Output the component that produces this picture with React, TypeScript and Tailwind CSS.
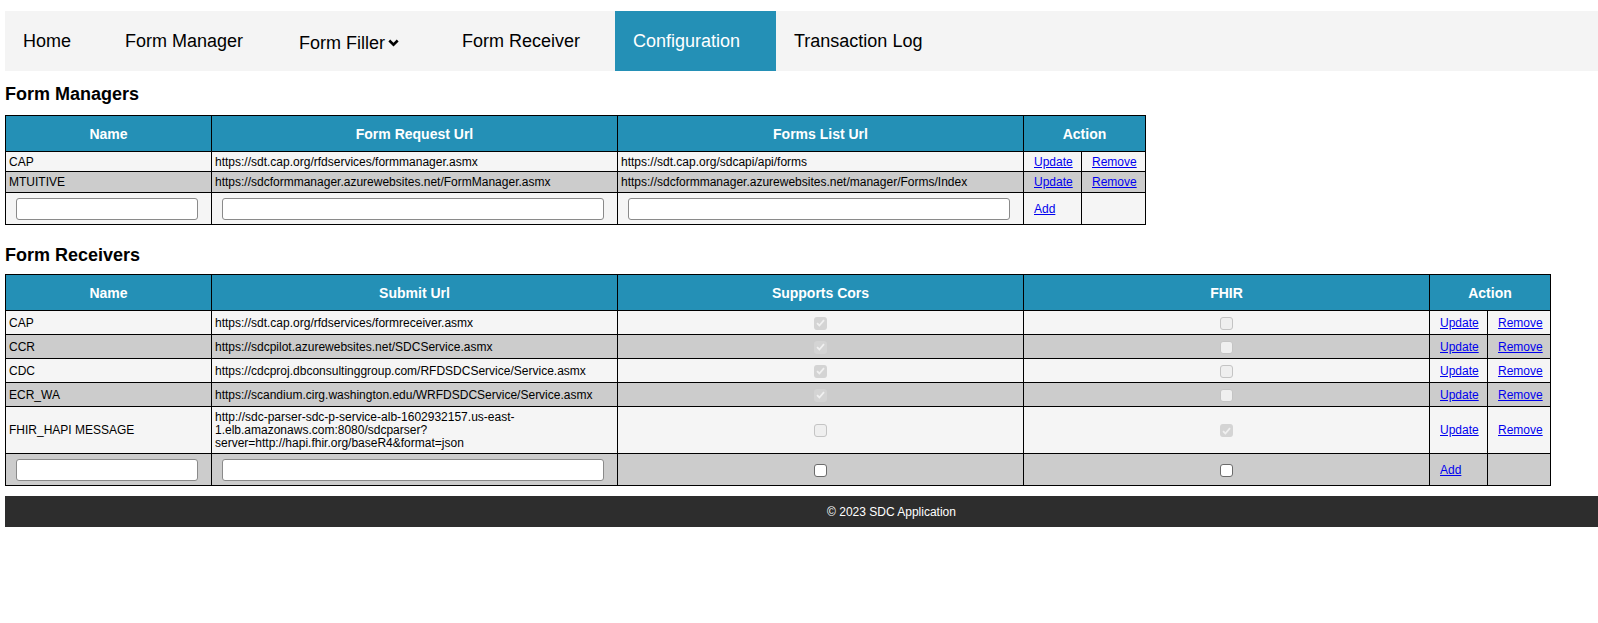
import React from 'react'

const managers = [
  {
    name: 'CAP',
    requestUrl: 'https://sdt.cap.org/rfdservices/formmanager.asmx',
    listUrl: 'https://sdt.cap.org/sdcapi/api/forms',
  },
  {
    name: 'MTUITIVE',
    requestUrl: 'https://sdcformmanager.azurewebsites.net/FormManager.asmx',
    listUrl: 'https://sdcformmanager.azurewebsites.net/manager/Forms/Index',
  },
]

const receivers = [
  { name: 'CAP', url: ['https://sdt.cap.org/rfdservices/formreceiver.asmx'], cors: true, fhir: false },
  { name: 'CCR', url: ['https://sdcpilot.azurewebsites.net/SDCService.asmx'], cors: true, fhir: false },
  { name: 'CDC', url: ['https://cdcproj.dbconsultinggroup.com/RFDSDCService/Service.asmx'], cors: true, fhir: false },
  { name: 'ECR_WA', url: ['https://scandium.cirg.washington.edu/WRFDSDCService/Service.asmx'], cors: true, fhir: false },
  {
    name: 'FHIR_HAPI MESSAGE',
    url: [
      'http://sdc-parser-sdc-p-service-alb-1602932157.us-east-',
      '1.elb.amazonaws.com:8080/sdcparser?',
      'server=http://hapi.fhir.org/baseR4&format=json',
    ],
    cors: false,
    fhir: true,
  },
]

// row striping: odd rows light, even rows gray
const rowBg = (i: number) => (i % 2 === 0 ? 'bg-[#f5f5f5]' : 'bg-[#cccccc]')

function Check({ checked, disabled }: { checked?: boolean; disabled?: boolean }) {
  if (!disabled) {
    return <span className="inline-block w-[13px] h-[13px] rounded-[3px] border border-[#6b6b6b] bg-white align-middle" />
  }
  if (checked) {
    return (
      <span className="inline-flex items-center justify-center w-[13px] h-[13px] rounded-[3px] bg-[#d4d4d4] align-middle">
        <svg width="9" height="8" viewBox="0 0 9 8">
          <path d="M1 4.2 L3.4 6.5 L8 1.2" stroke="#f0f0f0" strokeWidth="1.8" fill="none" />
        </svg>
      </span>
    )
  }
  return <span className="inline-block w-[13px] h-[13px] rounded-[3px] border border-[#c4c4c4] bg-[#efefef] align-middle" />
}

function TextInput() {
  return <span className="block w-full h-[22px] rounded-[3px] border border-[#8a8a8a] bg-white" />
}

function LinkText({ children }: { children: React.ReactNode }) {
  return <a className="text-[#0000ee] underline cursor-pointer">{children}</a>
}

const th = 'h-[36px] border border-black bg-[#2490b6] text-white font-bold text-[14px] text-center align-middle'
const td = 'border border-black px-[3px] py-0 align-middle'
const tdAction = 'border border-black pl-[10px] pr-[6px] py-0 align-middle text-left'

export default function App() {
  return (
    <div className="min-h-[623px] bg-white pt-[11px] pl-[5px] text-black" style={{ fontFamily: '"Liberation Sans", Arial, sans-serif' }}>
      {/* Nav */}
      <nav className="flex h-[60px] bg-[#f4f4f4] text-[18px]">
        <a className="flex items-center w-[102px] pl-[18px]">Home</a>
        <a className="flex items-center w-[174px] pl-[18px]">Form Manager</a>
        <a className="flex items-center w-[163px] pl-[18px] pt-[4px]">
          Form Filler
          <svg className="ml-[3px]" width="11" height="8" viewBox="0 0 11 8">
            <path d="M1.3 1.5 L5.5 5.6 L9.7 1.5" stroke="#000" strokeWidth="2.6" fill="none" />
          </svg>
        </a>
        <a className="flex items-center w-[171px] pl-[18px]">Form Receiver</a>
        <a className="flex items-center w-[161px] pl-[18px] bg-[#2490b6] text-white">Configuration</a>
        <a className="flex items-center pl-[18px]">Transaction Log</a>
      </nav>

      {/* Form Managers */}
      <h3 className="mt-[13px] mb-[11px] text-[18px] leading-[20px] font-bold">Form Managers</h3>
      <table className="table-fixed border-collapse w-[1140px] text-[12px] leading-[14px]">
        <colgroup>
          <col className="w-[206px]" />
          <col className="w-[406px]" />
          <col className="w-[406px]" />
          <col className="w-[58px]" />
          <col className="w-[64px]" />
        </colgroup>
        <thead>
          <tr>
            <th className={th}>Name</th>
            <th className={th}>Form Request Url</th>
            <th className={th}>Forms List Url</th>
            <th className={th} colSpan={2}>Action</th>
          </tr>
        </thead>
        <tbody>
          {managers.map((m, i) => (
            <tr key={m.name} className={rowBg(i)}>
              <td className={`${td} ${i === 0 ? 'h-[20px]' : 'h-[21px]'}`}>{m.name}</td>
              <td className={td}>{m.requestUrl}</td>
              <td className={td}>{m.listUrl}</td>
              <td className={tdAction}><LinkText>Update</LinkText></td>
              <td className={tdAction}><LinkText>Remove</LinkText></td>
            </tr>
          ))}
          <tr className={rowBg(managers.length)}>
            <td className="border border-black h-[32px] pl-[10px] pr-[13px] align-middle"><TextInput /></td>
            <td className="border border-black pl-[10px] pr-[13px] align-middle"><TextInput /></td>
            <td className="border border-black pl-[10px] pr-[13px] align-middle"><TextInput /></td>
            <td className={tdAction}><LinkText>Add</LinkText></td>
            <td className="border border-black" />
          </tr>
        </tbody>
      </table>

      {/* Form Receivers */}
      <h3 className="mt-[20px] mb-[9px] text-[18px] leading-[20px] font-bold">Form Receivers</h3>
      <table className="table-fixed border-collapse w-[1545px] text-[12px] leading-[14px]">
        <colgroup>
          <col className="w-[206px]" />
          <col className="w-[406px]" />
          <col className="w-[406px]" />
          <col className="w-[406px]" />
          <col className="w-[58px]" />
          <col className="w-[63px]" />
        </colgroup>
        <thead>
          <tr>
            <th className={th}>Name</th>
            <th className={th}>Submit Url</th>
            <th className={th}>Supports Cors</th>
            <th className={th}>FHIR</th>
            <th className={th} colSpan={2}>Action</th>
          </tr>
        </thead>
        <tbody>
          {receivers.map((r, i) => (
            <tr key={r.name} className={rowBg(i)}>
              <td className={`${td} h-[24px]`}>{r.name}</td>
              <td className={`${td} ${r.url.length > 1 ? 'leading-[13px] pt-[4px] pb-[3px]' : ''}`}>
                {r.url.map((line) => (
                  <div key={line}>{line}</div>
                ))}
              </td>
              <td className={`${td} text-center`}><Check checked={r.cors} disabled /></td>
              <td className={`${td} text-center`}><Check checked={r.fhir} disabled /></td>
              <td className={tdAction}><LinkText>Update</LinkText></td>
              <td className={tdAction}><LinkText>Remove</LinkText></td>
            </tr>
          ))}
          <tr className={rowBg(receivers.length)}>
            <td className="border border-black h-[32px] pl-[10px] pr-[13px] align-middle"><TextInput /></td>
            <td className="border border-black pl-[10px] pr-[13px] align-middle"><TextInput /></td>
            <td className={`${td} text-center`}><Check /></td>
            <td className={`${td} text-center`}><Check /></td>
            <td className={tdAction}><LinkText>Add</LinkText></td>
            <td className="border border-black" />
          </tr>
        </tbody>
      </table>

      {/* Footer */}
      <footer className="mt-[10px] h-[31px] bg-[#2d2d2d] text-white text-[12px] flex items-center justify-center pl-[180px]">
        © 2023 SDC Application
      </footer>
    </div>
  )
}
